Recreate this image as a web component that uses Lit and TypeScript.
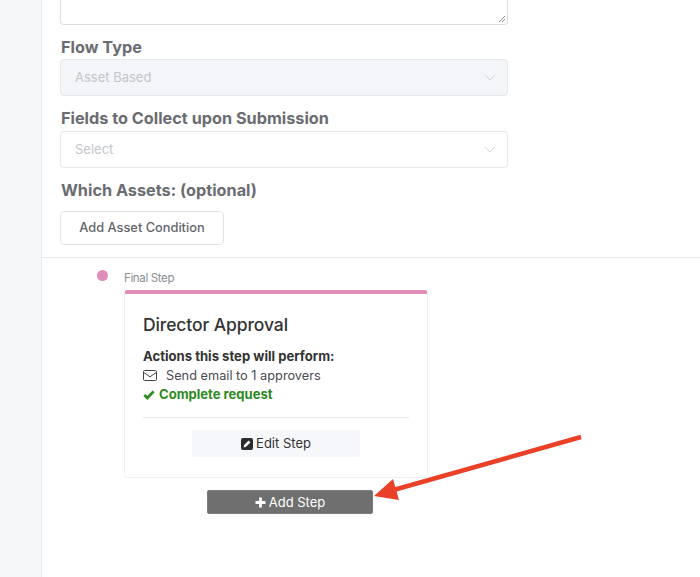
import { LitElement, html, css } from "lit";
import { customElement } from "lit/decorators.js";

const chevron = html`<svg class="chev" width="12" height="7" viewBox="0 0 12 7"><path d="M1 1l5 5 5-5" fill="none" stroke="currentColor" stroke-width="1"/></svg>`;

@customElement("app-root")
export class AppRoot extends LitElement {
  static styles = css`
    :host { display: block; width: 700px; height: 577px; overflow: hidden; position: relative; background: #fff; font-family: Inter, "Liberation Sans", sans-serif; -webkit-font-smoothing: antialiased; }
    * { box-sizing: border-box; }
    .layout { display: flex; height: 577px; }
    .side { width: 42px; flex: none; background: #f6f7f8; border-right: 1px solid #e8e9ec; }
    .main { flex: 1; min-width: 0; }
    .form { width: 466px; padding-left: 18px; }
    .textarea { height: 25px; border: 1px solid #dcdde2; border-top: 0; border-radius: 0 0 4px 4px; position: relative; }
    .grip { position: absolute; right: 1px; bottom: 1px; }
    .label { font-size: 16.25px; line-height: 20px; font-weight: 700; color: #6a6c71; padding-left: 1px; }
    .l1, .l2, .l3 { margin-top: 12px; }
    .select { height: 37px; margin-top: 2px; border: 1px solid #e7e8ee; border-radius: 4px; display: flex; align-items: center; justify-content: space-between; padding: 0 11px 1px 14px; font-size: 13px; color: #c3c5cc; }
    .select.dis { background: #f4f5f9; }
    .select.s2 { margin-top: 3px; }
    .chev { color: #d2d3d9; }
    .cond { margin-top: 11px; width: 164px; height: 34px; border: 1px solid #e2e3e8; border-radius: 4px; background: #fff; color: #63656a; font: 500 12.8px/1 Inter, "Liberation Sans", sans-serif; display: flex; align-items: center; justify-content: center; padding: 1px 0 0; }
    .rule { height: 1px; background: #e8e9ec; margin-top: 12px; }
    .flow { display: grid; grid-template-columns: 11px 304px; column-gap: 16px; padding: 11px 0 0 55px; }
    .dot { width: 11px; height: 11px; border-radius: 50%; background: #dd8db8; margin-top: 1px; }
    .final { font-size: 11.5px; line-height: 14px; color: #8a8c91; letter-spacing: -0.35px; margin-top: 2px; }
    .card { grid-column: 2; margin-top: 5px; height: 188px; border: 1px solid #f0f0f5; border-top: 4px solid #dd8db8; border-radius: 4px; padding: 19px 18px 0; display: flex; flex-direction: column; }
    h2 { margin: 0; font-size: 17.5px; line-height: 24px; font-weight: 500; color: #333; letter-spacing: -0.1px; }
    .acts { margin-top: 10px; font-size: 13px; line-height: 19px; color: #333; }
    .acts b { font-weight: 700; display: block; font-size: 13.1px; }
    .row { display: flex; align-items: center; color: #4a4a4f; font-size: 12.75px; }
    .row svg { margin-right: 9px; }
    .ok { color: #2f8a1f; font-weight: 700; display: flex; align-items: center; gap: 4px; font-size: 13.05px; }
    .sep { height: 1px; background: #e8e9ec; margin-top: 13px; }
    .edit { align-self: center; margin-top: 12px; width: 168px; height: 27px; background: #f6f7fa; border: 0; border-radius: 2px; color: #333; font: 400 13px/1 Inter, "Liberation Sans", sans-serif; display: flex; align-items: center; justify-content: center; gap: 3px; padding: 0; }
    .add { display: flex; margin: 12px 0 0 165px; width: 166px; height: 24px; background: #6f6f6f; border: 1px solid #7c7c7c; border-radius: 2px; color: #fff; font: 400 13px/1 Inter, "Liberation Sans", sans-serif; align-items: center; justify-content: center; gap: 3px; padding: 0; }
    .arrow { position: absolute; left: 360px; top: 425px; }
  `;
  render() {
    return html`
      <div class="layout">
        <div class="side"></div>
        <div class="main">
          <div class="form">
            <div class="textarea">
              <svg class="grip" width="8" height="8" viewBox="0 0 8 8"><path d="M1 7l6-6M4 7l3-3" stroke="#8d8d8d" stroke-width="1" fill="none"/></svg>
            </div>
            <div class="label l1">Flow Type</div>
            <div class="select dis"><span>Asset Based</span>${chevron}</div>
            <div class="label l2">Fields to Collect upon Submission</div>
            <div class="select s2"><span>Select</span>${chevron}</div>
            <div class="label l3">Which Assets: (optional)</div>
            <button class="cond">Add Asset Condition</button>
          </div>
          <div class="rule"></div>
          <div class="flow">
            <div class="dot"></div>
            <div class="final">Final Step</div>
            <div class="card">
              <h2>Director Approval</h2>
              <div class="acts">
                <b>Actions this step will perform:</b>
                <div class="row">
                  <svg width="14" height="11" viewBox="0 0 14 11"><rect x=".5" y=".5" width="13" height="10" rx="1.2" fill="none" stroke="#444" /><path d="M.8 2.5L7 6.8l6.2-4.3" fill="none" stroke="#444"/></svg>
                  Send email to 1 approvers
                </div>
                <div class="ok">
                  <svg width="12" height="10" viewBox="0 0 12 10"><path d="M1.4 5l3 3 6.2-6.6" fill="none" stroke="#2f8a1f" stroke-width="2.8"/></svg>
                  Complete request
                </div>
              </div>
              <div class="sep"></div>
              <button class="edit">
                <svg width="12" height="12" viewBox="0 0 12 12"><rect width="12" height="12" rx="2" fill="#2b2b2b"/><path d="M2.6 9.4l.6-2.4L7.6 2.6 9.4 4.4 5 8.8z" fill="#fff"/></svg>
                Edit Step
              </button>
            </div>
          </div>
          <button class="add">
            <svg width="11" height="11" viewBox="0 0 11 11"><path d="M5.5 .5v10M.5 5.5h10" stroke="#fff" stroke-width="2.8"/></svg>
            Add Step
          </button>
        </div>
      </div>
      <svg class="arrow" width="240" height="90" viewBox="0 0 240 90">
        <path d="M221 12L30 66" stroke="#ea4027" stroke-width="4.5" fill="none"/>
        <path d="M14 71L33 54 39 75z" fill="#ea4027"/>
      </svg>
    `;
  }
}
